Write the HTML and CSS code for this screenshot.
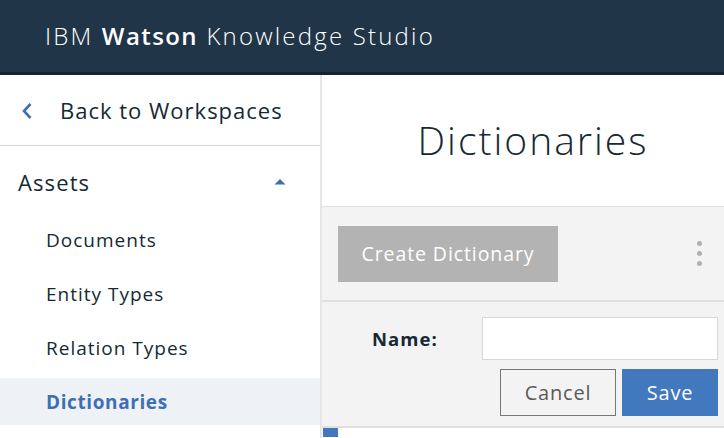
FILE: index.html
```html
<!DOCTYPE html>
<html>
<head>
<meta charset="utf-8">
<link rel="stylesheet" href="styles.css">
</head>
<body>
<div class="app">
  <header class="topbar">
    <span class="brand">IBM <b>Watson</b> Knowledge Studio</span>
  </header>
  <div class="content">
    <nav class="sidebar">
      <div class="back">
        <svg class="chev" width="12" height="18" viewBox="0 0 12 18"><path d="M9.5 2 L3 9 L9.5 16" fill="none" stroke="#3d70b2" stroke-width="2.6"/></svg>
        <span>Back to Workspaces</span>
      </div>
      <div class="assets">
        <span>Assets</span>
        <svg class="caret" width="12" height="7" viewBox="0 0 12 7"><path d="M0.5 6.5 L6 1 L11.5 6.5 Z" fill="#3d70b2"/></svg>
      </div>
      <ul class="items">
        <li>Documents</li>
        <li>Entity Types</li>
        <li>Relation Types</li>
        <li class="active">Dictionaries</li>
      </ul>
    </nav>
    <main class="main">
      <div class="title">Dictionaries</div>
      <div class="toolbar">
        <button class="create">Create Dictionary</button>
        <div class="kebab"><i></i><i></i><i></i></div>
      </div>
      <div class="form">
        <div class="row">
          <label class="lbl">Name:</label>
          <div class="input"></div>
        </div>
        <div class="actions">
          <button class="cancel">Cancel</button>
          <button class="save">Save</button>
        </div>
      </div>
      <div class="below"><span class="marker"></span></div>
    </main>
  </div>
</div>
</body>
</html>
```

FILE: styles.css
```css
* { box-sizing: border-box; }
html, body { margin: 0; padding: 0; }
body {
  width: 724px;
  height: 438px;
  overflow: hidden;
  background: #fff;
  font-family: "Open Sans", "Noto Sans", sans-serif;
  color: #152935;
}
.app { display: flex; flex-direction: column; height: 438px; }
.topbar {
  height: 75px;
  background: #213549;
  border-bottom: 3px solid #16232f;
  display: flex;
  align-items: center;
  padding-left: 45px;
  padding-bottom: 1px;
  flex: none;
}
.brand {
  color: #fff;
  font-size: 24px;
  font-weight: 300;
  letter-spacing: 2.2px;
}
.brand b { font-weight: 600; letter-spacing: 1.4px; }
.content { display: flex; flex: 1; min-height: 0; }
.sidebar {
  width: 322px;
  flex: none;
  border-right: 2px solid #e6e6e6;
}
.back {
  height: 71px;
  border-bottom: 1px solid #d4d4d4;
  display: flex;
  align-items: center;
  padding-left: 21px;
  font-size: 22px;
  letter-spacing: 1px;
}
.back .chev { margin-right: 27px; margin-top: 1px; }
.assets {
  height: 70px;
  display: flex;
  align-items: center;
  justify-content: space-between;
  padding-left: 18px;
  padding-right: 34px;
  font-size: 22px;
  letter-spacing: 1.1px;
  padding-top: 2px;
}
.caret { margin-top: -2px; }
.items { list-style: none; margin: 0; padding: 0; }
.items li {
  height: 47px;
  margin-bottom: 7px;
  display: flex;
  align-items: center;
  padding-left: 46px;
  font-size: 19px;
  letter-spacing: 1px;
}
.items li.active {
  background: #eef2f6;
  color: #3d70b2;
  font-weight: 700;
  letter-spacing: 0.6px;
  margin-top: 1px;
}
.main { flex: 1; display: flex; flex-direction: column; min-width: 0; }
.title {
  height: 131px;
  display: flex;
  align-items: center;
  justify-content: center;
  font-size: 39px;
  font-weight: 300;
  letter-spacing: 2px;
  color: #152935;
  padding-bottom: 2px;
  padding-left: 20px;
}
.toolbar {
  height: 96px;
  background: #f3f3f3;
  border-top: 1px solid #e0e0e0;
  border-bottom: 2px solid #e0e0e0;
  display: flex;
  align-items: center;
  justify-content: space-between;
  padding-left: 16px;
  padding-right: 22px;
}
.create {
  width: 220px;
  height: 56px;
  border: none;
  background: #b3b3b3;
  color: #fff;
  font-family: inherit;
  font-size: 19.5px;
  letter-spacing: 0.9px;
  padding: 0;
}
.kebab { display: flex; flex-direction: column; gap: 5px; }
.kebab i { width: 5px; height: 5px; border-radius: 50%; background: #b0b0b0; display: block; }
.form {
  height: 126px;
  background: #f3f3f3;
  border-bottom: 2px solid #e0e0e0;
  padding: 15px 6px 0 0;
  display: flex;
  flex-direction: column;
  align-items: flex-end;
}
.row { display: flex; align-items: center; }
.lbl {
  font-weight: 700;
  font-size: 18.5px;
  letter-spacing: 1.1px;
  color: #152935;
  margin-right: 44px;
  margin-top: -1px;
}
.input {
  width: 236px;
  height: 43px;
  background: #fff;
  border: 1px solid #d8d8d8;
}
.actions { display: flex; gap: 6px; margin-top: 9px; }
.actions button {
  height: 47px;
  font-family: inherit;
  font-size: 20px;
  letter-spacing: 0.8px;
  padding: 0;
}
.cancel {
  width: 116px;
  background: transparent;
  border: 1px solid #777;
  color: #5a5a5a;
}
.save {
  width: 96px;
  background: #4178be;
  border: none;
  color: #fff;
}
.below { flex: 1; }
.marker { display: block; width: 15px; height: 9px; background: #4178be; margin-left: 1px; }
```
